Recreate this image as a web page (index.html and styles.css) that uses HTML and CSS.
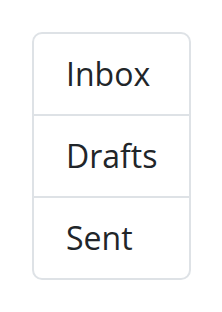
FILE: index.html
```html
<!DOCTYPE html>
<html lang="en">
  <head>
    <meta charset="UTF-8" />
    <meta name="viewport" content="width=device-width, initial-scale=1.0" />
    <title>Mailboxes</title>
    <link rel="stylesheet" href="styles.css">
  </head>
  <body>
    <ul class="list">
      <li class="list-item">Inbox</li>
      <li class="list-item">Drafts</li>
      <li class="list-item">Sent</li>
    </ul>
  </body>
</html>
```

FILE: styles.css
```css
* {
  margin: 0;
  padding: 0;
  box-sizing: border-box;
}
body {
  background: #fff;
  padding: 32px;
  font-family: "Open Sans", "Noto Sans", sans-serif;
  color: #212529;
}
.list {
  list-style: none;
  width: 159px;
  border: 2px solid #dee2e6;
  border-radius: 10px;
}
.list-item {
  font-size: 32px;
  line-height: 48px;
  padding: 16px 32px;
}
.list-item + .list-item {
  border-top: 2px solid #dee2e6;
}
```
